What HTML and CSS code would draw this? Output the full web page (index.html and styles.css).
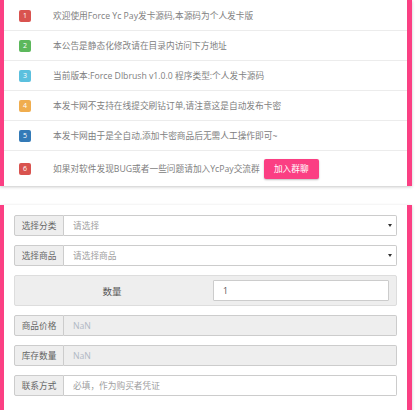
FILE: index.html
```html
<!DOCTYPE html>
<html lang="zh-CN">
<head>
<meta charset="utf-8">
<title>Force Yc Pay</title>
<link rel="stylesheet" href="styles.css">
</head>
<body>
<div class="page">
  <section class="card notice">
    <div class="notice-row"><span class="badge red">1</span><span class="notice-text">欢迎使用Force Yc Pay发卡源码,本源码为个人发卡版</span></div>
    <div class="notice-row"><span class="badge green">2</span><span class="notice-text">本公告是静态化修改请在目录内访问下方地址</span></div>
    <div class="notice-row"><span class="badge cyan">3</span><span class="notice-text">当前版本:Force Dlbrush v1.0.0 程序类型:个人发卡源码</span></div>
    <div class="notice-row"><span class="badge orange">4</span><span class="notice-text">本发卡网不支持在线提交刷钻订单,请注意这是自动发布卡密</span></div>
    <div class="notice-row"><span class="badge blue">5</span><span class="notice-text">本发卡网由于是全自动,添加卡密商品后无需人工操作即可~</span></div>
    <div class="notice-row last"><span class="badge red">6</span><span class="notice-text">如果对软件发现BUG或者一些问题请加入YcPay交流群</span><a class="btn-join" href="#">加入群聊</a></div>
  </section>

  <section class="card form">
    <div class="input-group">
      <span class="addon">选择分类</span>
      <div class="select"><span class="placeholder">请选择</span><span class="caret"></span></div>
    </div>
    <div class="input-group">
      <span class="addon">选择商品</span>
      <div class="select"><span class="placeholder">请选择商品</span><span class="caret"></span></div>
    </div>
    <div class="qty-well">
      <span class="qty-label">数量</span>
      <div class="qty-input">1</div>
    </div>
    <div class="input-group">
      <span class="addon">商品价格</span>
      <div class="field readonly"><span class="muted">NaN</span></div>
    </div>
    <div class="input-group">
      <span class="addon">库存数量</span>
      <div class="field readonly"><span class="muted">NaN</span></div>
    </div>
    <div class="input-group">
      <span class="addon">联系方式</span>
      <div class="field"><span class="placeholder">必填，作为购买者凭证</span></div>
    </div>
  </section>
</div>
</body>
</html>
```

FILE: styles.css
```css
* {
  box-sizing: border-box;
}

html, body {
  margin: 0;
  background: #fff;
}

body {
  font-family: "Open Sans", "Noto Sans CJK SC", sans-serif;
  font-size: 8.7px;
  color: #666;
}

.page {
  width: 412px;
  display: flex;
  flex-direction: column;
  gap: 19px;
}

.card {
  background: #fff;
  border-left: 4px solid #fb3f83;
  border-right: 5px solid #fb3f83;
  box-shadow: 0 1px 3px rgba(0, 0, 0, 0.22);
}

/* notice list */
.notice {
  padding-top: 1px;
}

.notice-row {
  height: 30px;
  display: flex;
  align-items: center;
  padding-left: 15px;
  border-bottom: 1px solid #ececec;
  white-space: nowrap;
}

.notice-row.last {
  height: 35px;
  border-bottom: none;
}

.badge {
  width: 12px;
  height: 12px;
  border-radius: 2px;
  color: #fff;
  font-size: 7px;
  line-height: 12px;
  text-align: center;
  margin-right: 22px;
  flex: none;
}

.badge.red { background: #d9534f; }
.badge.green { background: #5cb85c; }
.badge.cyan { background: #5bc0de; }
.badge.orange { background: #f0ad4e; }
.badge.blue { background: #337ab7; }

.notice-text {
  color: #808080;
}

.btn-join {
  margin-left: 4px;
  width: 55px;
  height: 20px;
  line-height: 20px;
  text-align: center;
  background: #fb3f83;
  color: #fff;
  border-radius: 2px;
  text-decoration: none;
  box-shadow: 0 1px 2px rgba(0, 0, 0, 0.25);
  flex: none;
}

/* order form */
.form {
  padding: 10px 10px 20px;
  display: flex;
  flex-direction: column;
  gap: 9px;
}

.input-group {
  display: flex;
  height: 21px;
}

.addon {
  flex: 0 0 50px;
  display: flex;
  align-items: center;
  justify-content: center;
  background: #eee;
  border: 1px solid #ccc;
  border-radius: 2px 0 0 2px;
  color: #666;
}

.select,
.field {
  flex: 1;
  display: flex;
  align-items: center;
  padding-left: 9px;
  padding-right: 4px;
  border: 1px solid #ccc;
  border-left: none;
  border-radius: 0 2px 2px 0;
  background: #fff;
}

.field.readonly {
  background: #eee;
}

.placeholder {
  color: #a0a0a0;
  flex: 1;
}

.muted {
  color: #b0b8c4;
}

.caret {
  width: 0;
  height: 0;
  border-left: 2.5px solid transparent;
  border-right: 2.5px solid transparent;
  border-top: 3px solid #333;
}

.qty-well {
  height: 31px;
  display: flex;
  align-items: center;
  padding: 0 7px 0 0;
  background: #eee;
  border: 1px solid #ddd;
  border-radius: 2px;
}

.qty-label {
  flex: 0 0 194px;
  text-align: center;
  color: #555;
  font-size: 9.5px;
}

.qty-input {
  flex: 1;
  height: 21px;
  margin-left: 4px;
  display: flex;
  align-items: center;
  padding-left: 9px;
  background: #fff;
  border: 1px solid #ccc;
  border-radius: 1px;
  color: #555;
}
```
